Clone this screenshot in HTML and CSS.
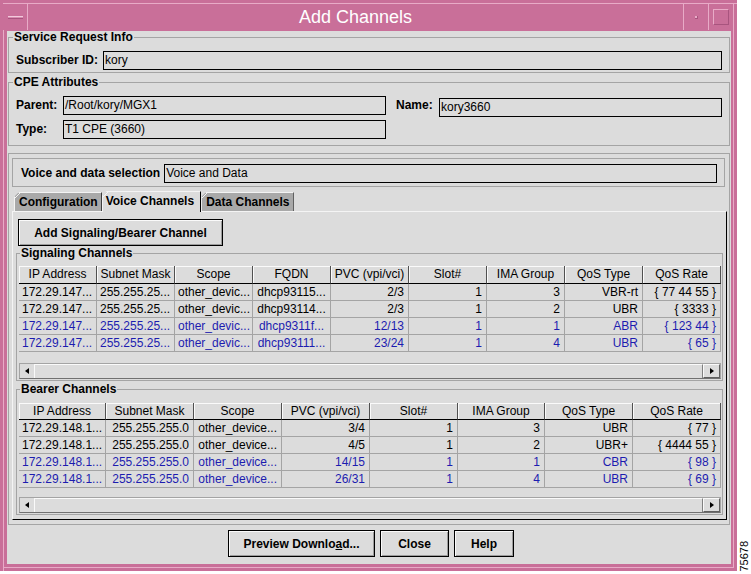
FILE: index.html
```html
<!DOCTYPE html>
<html>
<head>
<meta charset="utf-8">
<title>Add Channels</title>
<link rel="stylesheet" href="styles.css">
</head>
<body>
<div class="page">
  <div class="window">
    <div class="titlebar">
      <div class="tb-menu"><span class="tb-dash"></span></div>
      <div class="tb-title">Add Channels</div>
      <div class="tb-btn"><span class="tb-dot"></span></div>
      <div class="tb-btn"><span class="tb-square"></span></div>
    </div>
    <div class="client">
      <fieldset class="group g-top g-sri">
        <legend>Service Request Info</legend>
        <div class="row">
          <span class="lbl sub-lbl">Subscriber ID:</span>
          <div class="field grow">kory</div>
        </div>
      </fieldset>
      <fieldset class="group g-top g-cpe">
        <legend>CPE Attributes</legend>
        <div class="cpe-grid">
          <span class="lbl">Parent:</span>
          <div class="field">/Root/kory/MGX1</div>
          <span class="lbl name-lbl">Name:</span>
          <div class="field name-field">kory3660</div>
          <span class="lbl">Type:</span>
          <div class="field">T1 CPE (3660)</div>
        </div>
      </fieldset>
      <div class="outer">
        <div class="vd-box">
          <span class="lbl vd-lbl">Voice and data selection</span>
          <div class="field grow">Voice and Data</div>
        </div>
        <div class="tabs">
          <div class="tab">Configuration</div>
          <div class="tab active">Voice Channels</div>
          <div class="tab">Data Channels</div>
        </div>
        <div class="tabpanel">
          <button class="btn add-btn">Add Signaling/Bearer Channel</button>
          <fieldset class="group g-tbl sig">
            <legend>Signaling Channels</legend>
            <div class="vp">
              <div class="tr">
                <div class="th">IP Address</div><div class="th">Subnet Mask</div><div class="th">Scope</div><div class="th">FQDN</div><div class="th">PVC (vpi/vci)</div><div class="th">Slot#</div><div class="th">IMA Group</div><div class="th">QoS Type</div><div class="th">QoS Rate</div>
              </div>
              <div class="tr">
                <div class="td">172.29.147...</div><div class="td">255.255.25...</div><div class="td">other_devic...</div><div class="td c">dhcp93115...</div><div class="td r">2/3</div><div class="td r">1</div><div class="td r">3</div><div class="td r">VBR-rt</div><div class="td r">{ 77 44 55 }</div>
              </div>
              <div class="tr">
                <div class="td">172.29.147...</div><div class="td">255.255.25...</div><div class="td">other_devic...</div><div class="td c">dhcp93114...</div><div class="td r">2/3</div><div class="td r">1</div><div class="td r">2</div><div class="td r">UBR</div><div class="td r">{ 3333 }</div>
              </div>
              <div class="tr blue">
                <div class="td">172.29.147...</div><div class="td">255.255.25...</div><div class="td">other_devic...</div><div class="td c">dhcp9311f...</div><div class="td r">12/13</div><div class="td r">1</div><div class="td r">1</div><div class="td r">ABR</div><div class="td r">{ 123 44 }</div>
              </div>
              <div class="tr blue">
                <div class="td">172.29.147...</div><div class="td">255.255.25...</div><div class="td">other_devic...</div><div class="td c">dhcp93111...</div><div class="td r">23/24</div><div class="td r">1</div><div class="td r">4</div><div class="td r">UBR</div><div class="td r">{ 65 }</div>
              </div>
            </div>
            <div class="hscroll"><span class="sb-left"></span><span class="sb-thumb"></span><span class="sb-right"></span></div>
          </fieldset>
          <fieldset class="group g-tbl bear">
            <legend>Bearer Channels</legend>
            <div class="vp">
              <div class="tr">
                <div class="th">IP Address</div><div class="th">Subnet Mask</div><div class="th">Scope</div><div class="th">PVC (vpi/vci)</div><div class="th">Slot#</div><div class="th">IMA Group</div><div class="th">QoS Type</div><div class="th">QoS Rate</div>
              </div>
              <div class="tr">
                <div class="td">172.29.148.1...</div><div class="td r">255.255.255.0</div><div class="td r">other_device...</div><div class="td r">3/4</div><div class="td r">1</div><div class="td r">3</div><div class="td r">UBR</div><div class="td r">{ 77 }</div>
              </div>
              <div class="tr">
                <div class="td">172.29.148.1...</div><div class="td r">255.255.255.0</div><div class="td r">other_device...</div><div class="td r">4/5</div><div class="td r">1</div><div class="td r">2</div><div class="td r">UBR+</div><div class="td r">{ 4444 55 }</div>
              </div>
              <div class="tr blue">
                <div class="td">172.29.148.1...</div><div class="td r">255.255.255.0</div><div class="td r">other_device...</div><div class="td r">14/15</div><div class="td r">1</div><div class="td r">1</div><div class="td r">CBR</div><div class="td r">{ 98 }</div>
              </div>
              <div class="tr blue">
                <div class="td">172.29.148.1...</div><div class="td r">255.255.255.0</div><div class="td r">other_device...</div><div class="td r">26/31</div><div class="td r">1</div><div class="td r">4</div><div class="td r">UBR</div><div class="td r">{ 69 }</div>
              </div>
            </div>
            <div class="hscroll"><span class="sb-left"></span><span class="sb-thumb"></span><span class="sb-right"></span></div>
          </fieldset>
        </div>
      </div>
      <div class="buttons">
        <button class="btn b-prev">Preview Downlo<u>a</u>d...</button>
        <button class="btn b-close">Close</button>
        <button class="btn b-help">Help</button>
      </div>
    </div>
  </div>
  <div class="side"><span class="figno">75678</span></div>
</div>
</body>
</html>
```
FILE: styles.css
```css
* { box-sizing: border-box; }
html, body { margin: 0; padding: 0; }
body {
  background: #ffffff;
  font-family: "Liberation Sans", Arial, sans-serif;
  font-size: 12px;
  color: #000;
}
.page { display: flex; width: 751px; height: 574px; }

/* window frame */
.window {
  width: 737px;
  height: 571px;
  display: flex;
  flex-direction: column;
  padding: 3px 4px 0 3px;
  background: #c96f99;
  box-shadow: inset 3px 3px 0 #c96f99, inset 4px 4px 0 #e8abc7,
              inset -3px -3px 0 #c96f99, inset -4px -4px 0 #e8abc7;
}
.titlebar {
  height: 27px;
  display: flex;
  background: #c96f99;
  border-top: 1px solid #e8abc7;
}
.tb-menu {
  width: 25px;
  border-right: 1px solid #e8abc7;
  display: flex;
  align-items: center;
  justify-content: center;
}
.tb-dash {
  width: 15px;
  height: 3px;
  background: #d98cb0;
  border-top: 1px solid #f2cadc;
  border-bottom: 1px solid #a8547e;
}
.tb-title {
  flex: 1;
  text-align: center;
  color: #fff;
  font-size: 18px;
  line-height: 27px;
}
.tb-btn {
  width: 25px;
  border-left: 1px solid #e8abc7;
  display: flex;
  align-items: center;
  justify-content: center;
}
.tb-dot {
  width: 3px;
  height: 3px;
  background: #e8abc7;
  border-right: 1px solid #a8547e;
  border-bottom: 1px solid #a8547e;
}
.tb-square {
  width: 16px;
  height: 16px;
  border: 1px solid;
  border-color: #e8abc7 #a8547e #a8547e #e8abc7;
}

/* client area */
.client {
  flex: 1;
  margin: 1px 2px 7px 4px;
  background: #dcdcdc;
  padding: 0 1px;
  display: flex;
  flex-direction: column;
}
.group {
  margin: 0;
  border: 1px solid #a4a4a4;
  min-width: 0;
}
.group legend {
  padding: 0 1px;
  font-weight: bold;
  line-height: 13px;
}
.g-top legend { margin-left: -3px; }
.g-sri { padding: 7px 7px 2px 7px; }
.g-cpe { margin-top: 3px; padding: 7px 7px 6px 7px; }

.row { display: flex; height: 19px; }
.lbl { font-weight: bold; line-height: 19px; white-space: nowrap; }
.sub-lbl { width: 87px; }
.field {
  height: 19px;
  border: 1px solid #000;
  padding: 0 1px;
  line-height: 17px;
  white-space: nowrap;
  overflow: hidden;
  background: #dcdcdc;
}
.grow { flex: 1; }
.cpe-grid {
  display: grid;
  grid-template-columns: 47px 323px 53px 1fr;
  grid-auto-rows: 19px;
  row-gap: 5px;
}
.name-lbl { padding-left: 10px; }
.name-field { margin-top: 2px; }

/* voice box + tabs */
.outer {
  margin-top: 7px;
  border: 1px solid #a4a4a4;
  padding: 4px 2px 4px 3px;
}
.vd-box {
  display: flex;
  margin-right: 2px;
  border: 1px solid #a4a4a4;
  padding: 5px 7px 3px 8px;
}
.vd-lbl { margin-right: 4px; }

.tabs {
  display: flex;
  align-items: flex-end;
  height: 21px;
  margin: 4px 0 -1px 2px;
}
.tab {
  height: 19px;
  margin-bottom: 1px;
  padding: 0 3px 0 4px;
  font-weight: bold;
  line-height: 18px;
  white-space: nowrap;
  background-color: #a9a9a9;
  border-top: 1px solid #f4f4f4;
  border-left: 1px solid #f4f4f4;
  border-right: 1px solid #000;
  clip-path: polygon(0 5px, 5px 0, 100% 0, 100% 100%, 0 100%);
  background-image: linear-gradient(135deg, transparent 3px, #f4f4f4 3px, #f4f4f4 4.2px, transparent 4.2px);
}
.tab.active {
  height: 21px;
  margin-bottom: 0;
  padding: 0 6px 0 3px;
  line-height: 19px;
  background-color: #dcdcdc;
}
.tabpanel {
  border: 1px solid;
  border-color: #f4f4f4 #000 #000 #f4f4f4;
  padding: 0 0 4px 0;
}

/* buttons */
.btn {
  display: block;
  height: 27px;
  padding: 0;
  border: 1px solid #000;
  background: #dcdcdc;
  box-shadow: inset 1px 1px 0 #fafafa, inset -1px -1px 0 #9c9c9c;
  font-family: "Liberation Sans", Arial, sans-serif;
  font-size: 12px;
  font-weight: bold;
  color: #000;
}
.add-btn { margin: 7px 0 0 5px; width: 205px; }
.buttons {
  display: flex;
  justify-content: center;
  gap: 5px;
  margin-top: 5px;
  padding-left: 4px;
}
.b-prev { width: 147px; }
.b-close { width: 69px; }
.b-help { width: 60px; }

/* table groups */
.g-tbl { margin: 0 3px; padding: 6px 1px 1px 2px; }
.g-tbl legend { margin-left: 1px; }
.sig legend { line-height: 14px; }
.bear { margin-top: 2px; padding-top: 7px; }
.vp { overflow: hidden; }
.sig .vp { height: 97px; }
.bear .vp { height: 94px; }
.tr { display: grid; }
.sig .tr { grid-template-columns: repeat(9, 78px); }
.bear .tr { grid-template-columns: 87px 88px 88px 88px 88px 87px 88px 88px; }
.th {
  height: 18px;
  border-right: 1px solid #505050;
  border-bottom: 1px solid #000;
  box-shadow: inset 1px 1px 0 #fafafa;
  text-align: center;
  line-height: 17px;
  white-space: nowrap;
  overflow: hidden;
}
.bear .th { height: 17px; line-height: 16px; }
.td {
  height: 17px;
  border-right: 1px solid #a4a4a4;
  border-bottom: 1px solid #a4a4a4;
  padding: 0 3px;
  line-height: 16px;
  white-space: nowrap;
  overflow: hidden;
}
.td.r { text-align: right; padding: 0 4px 0 0; }
.td.c { text-align: center; padding: 0; }
.blue .td { color: #1c1cb0; }

/* scrollbar */
.hscroll {
  display: flex;
  height: 16px;
  border: 1px solid #a4a4a4;
  border-bottom-color: #707070;
}
.sb-left {
  width: 14px;
  display: flex;
  align-items: center;
  justify-content: center;
}
.sb-left::before {
  content: "";
  border-right: 4px solid #000;
  border-top: 3px solid transparent;
  border-bottom: 3px solid transparent;
}
.sb-thumb {
  flex: 1;
  border-left: 1px solid #fafafa;
  border-top: 1px solid #fafafa;
  border-right: 1px solid #808080;
}
.sb-right {
  width: 17px;
  border: 1px solid;
  border-color: #fafafa #606060 #606060 #fafafa;
  display: flex;
  align-items: center;
  justify-content: center;
}
.sb-right::before {
  content: "";
  border-left: 4px solid #000;
  border-top: 3px solid transparent;
  border-bottom: 3px solid transparent;
}

/* figure number */
.side {
  flex: 1;
  display: flex;
  align-items: flex-end;
  justify-content: center;
  padding-bottom: 2px;
}
.figno {
  writing-mode: vertical-rl;
  transform: rotate(180deg);
  font-size: 11px;
  line-height: 11px;
}
```
